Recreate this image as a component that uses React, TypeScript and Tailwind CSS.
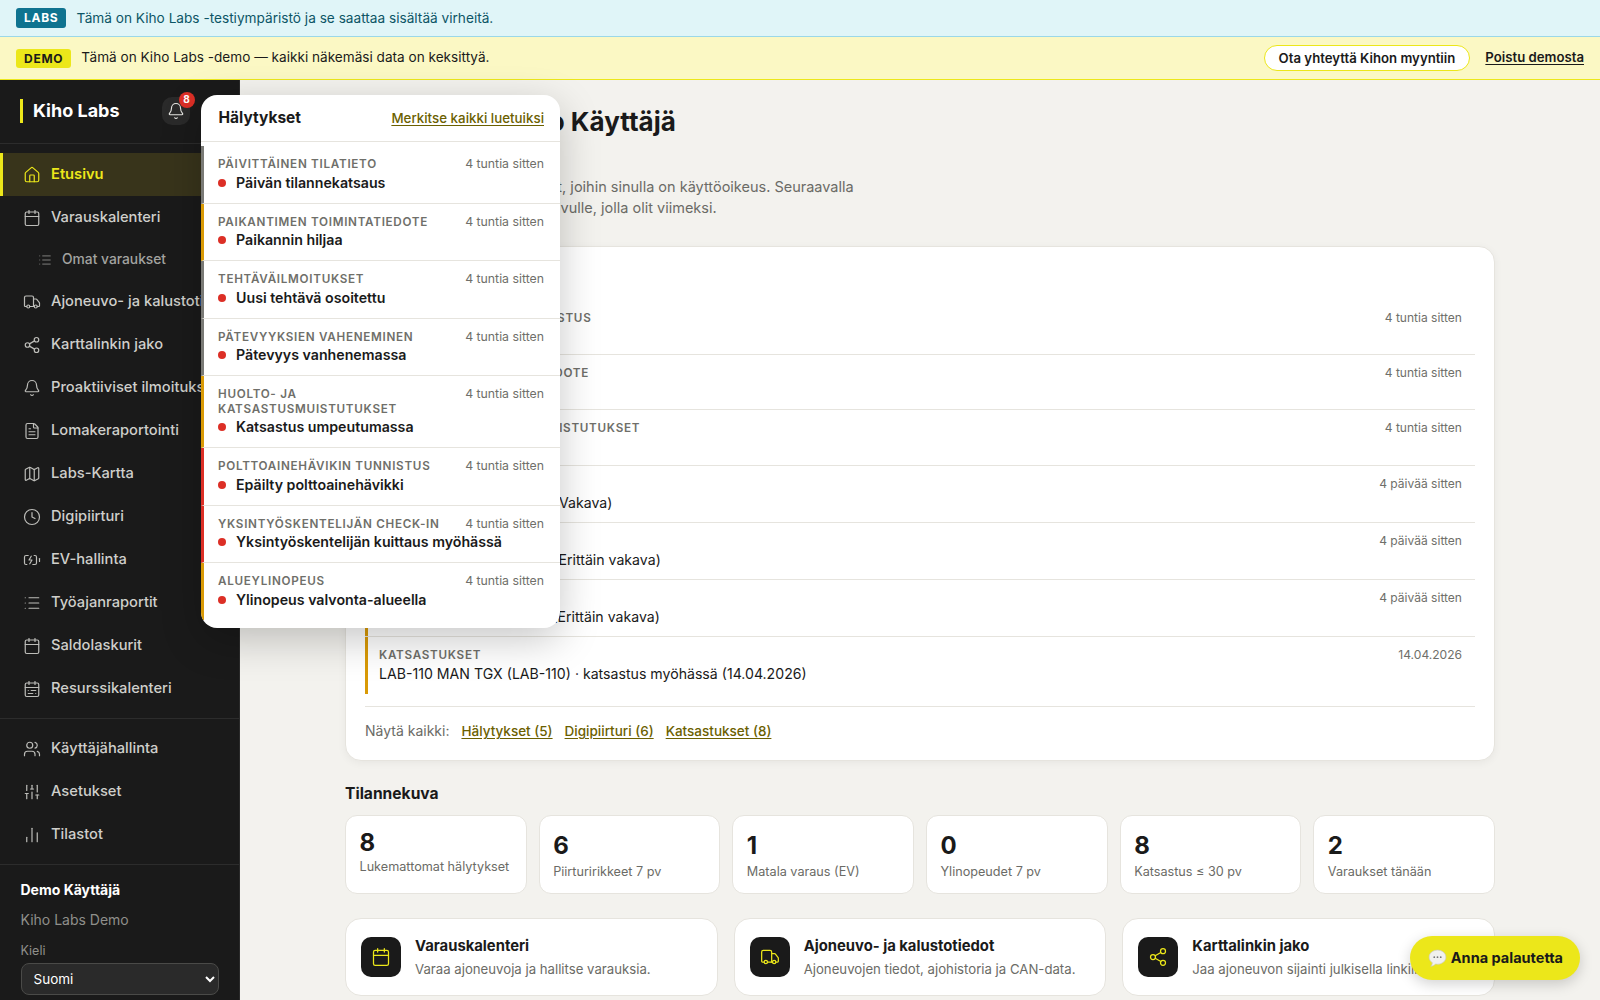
import {
  Bell,
  BatteryCharging,
  Calendar,
  CalendarRange,
  ChartNoAxesColumn,
  Clock,
  FileText,
  House,
  List,
  Map,
  Share2,
  SlidersVertical,
  Truck,
  Users,
} from 'lucide-react';

const font = { fontFamily: 'Inter, "Noto Sans", sans-serif' };

const mainNav = [
  { icon: House, label: 'Etusivu', active: true },
  { icon: Calendar, label: 'Varauskalenteri' },
  { icon: List, label: 'Omat varaukset', sub: true },
  { icon: Truck, label: 'Ajoneuvo- ja kalustotiedot' },
  { icon: Share2, label: 'Karttalinkin jako' },
  { icon: Bell, label: 'Proaktiiviset ilmoitukset' },
  { icon: FileText, label: 'Lomakeraportointi' },
  { icon: Map, label: 'Labs-Kartta' },
  { icon: Clock, label: 'Digipiirturi' },
  { icon: BatteryCharging, label: 'EV-hallinta' },
  { icon: List, label: 'Työajanraportit' },
  { icon: Calendar, label: 'Saldolaskurit' },
  { icon: CalendarRange, label: 'Resurssikalenteri' },
];

const adminNav = [
  { icon: Users, label: 'Käyttäjähallinta' },
  { icon: SlidersVertical, label: 'Asetukset' },
  { icon: ChartNoAxesColumn, label: 'Tilastot' },
];

const alerts = [
  { label: 'Päivittäinen tilatieto', title: 'Päivän tilannekatsaus', bar: 'border-l-[#7a7a76]' },
  { label: 'Paikantimen toimintatiedote', title: 'Paikannin hiljaa', bar: 'border-l-[#d99a06]' },
  { label: 'Tehtäväilmoitukset', title: 'Uusi tehtävä osoitettu', bar: 'border-l-[#7a7a76]' },
  { label: 'Pätevyyksien vaheneminen', title: 'Pätevyys vanhenemassa', bar: 'border-l-[#7a7a76]' },
  { label: 'Huolto- ja katsastusmuistutukset', title: 'Katsastus umpeutumassa', bar: 'border-l-[#d99a06]' },
  { label: 'Polttoainehävikin tunnistus', title: 'Epäilty polttoainehävikki', bar: 'border-l-[#dc2f26]' },
  { label: 'Yksintyöskentelijän check-in', title: 'Yksintyöskentelijän kuittaus myöhässä', bar: 'border-l-[#dc2f26]' },
  { label: 'Alueylinopeus', title: 'Ylinopeus valvonta-alueella', bar: 'border-l-[#d99a06]' },
];

const attention = [
  { label: 'Polttoainehävikin tunnistus', text: 'Epäilty polttoainehävikki', time: '4 tuntia sitten', bar: 'border-l-[#dc2f26]', height: 'h-[55px]' },
  { label: 'Paikantimen toimintatiedote', text: 'Paikannin hiljaa', time: '4 tuntia sitten', bar: 'border-l-[#d99a06]', height: 'h-[55px]' },
  { label: 'Huolto- ja katsastusmuistutukset', text: 'Katsastus umpeutumassa', time: '4 tuntia sitten', bar: 'border-l-[#d99a06]', height: 'h-[56px]' },
  { label: 'Digipiirturi', text: 'LAB-104 Volvo · Lepoaika (Vakava)', time: '4 päivää sitten', bar: 'border-l-[#d99a06]', height: 'h-[57px]' },
  { label: 'Digipiirturi', text: 'LAB-102 Volvo · Lepoaika (Erittäin vakava)', time: '4 päivää sitten', bar: 'border-l-[#d99a06]', height: 'h-[57px]' },
  { label: 'Digipiirturi', text: 'LAB-107 Volvo · Lepoaika (Erittäin vakava)', time: '4 päivää sitten', bar: 'border-l-[#d99a06]', height: 'h-[57px]' },
  { label: 'Katsastukset', text: 'LAB-110 MAN TGX (LAB-110) · katsastus myöhässä (14.04.2026)', time: '14.04.2026', bar: 'border-l-[#d99a06]', height: 'h-[57px]' },
];

const stats = [
  { value: '8', label: 'Lukemattomat hälytykset', tight: true },
  { value: '6', label: 'Piirturirikkeet 7 pv' },
  { value: '1', label: 'Matala varaus (EV)' },
  { value: '0', label: 'Ylinopeudet 7 pv' },
  { value: '8', label: 'Katsastus ≤ 30 pv' },
  { value: '2', label: 'Varaukset tänään' },
];

const shortcuts = [
  { icon: Calendar, title: 'Varauskalenteri', text: 'Varaa ajoneuvoja ja hallitse varauksia.' },
  { icon: Truck, title: 'Ajoneuvo- ja kalustotiedot', text: 'Ajoneuvojen tiedot, ajohistoria ja CAN-data.' },
  { icon: Share2, title: 'Karttalinkin jako', text: 'Jaa ajoneuvon sijainti julkisella linkillä.' },
];

function NavItem({ item }: { item: { icon: typeof Bell; label: string; active?: boolean; sub?: boolean } }) {
  const Icon = item.icon;
  if (item.sub) {
    return (
      <div className="flex h-[41px] items-center gap-[10px] whitespace-nowrap pl-[38px] text-[13.8px] font-medium text-[#a3a3a0]">
        <Icon size={14} strokeWidth={1.5} className="shrink-0 text-[#8d8d8a]" />
        {item.label}
      </div>
    );
  }
  return (
    <div
      className={
        item.active
          ? 'flex h-[43px] items-center gap-[10px] whitespace-nowrap border-l-[3px] border-[#ece71a] bg-[#38341b] pl-[20px] text-[14.7px] font-semibold text-[#ece71a]'
          : 'flex h-[43px] items-center gap-[10px] whitespace-nowrap pl-[23px] text-[14.7px] font-medium text-[#cfcfcb]'
      }
    >
      <Icon size={18} strokeWidth={1.6} className={item.active ? 'shrink-0' : 'shrink-0 text-[#bdbdb9]'} />
      {item.label}
    </div>
  );
}

function Sidebar() {
  return (
    <aside className="flex w-[240px] shrink-0 flex-col overflow-hidden border-r border-[#2a2a2a] bg-[#1a1a1a]">
      <div className="flex h-[64px] shrink-0 items-center border-b border-[#2c2c2c] pb-[2px] pl-[20px]">
        <span className="h-[24px] w-[3px] bg-[#ece71a]" />
        <span className="ml-[10px] text-[18px] font-bold text-white">Kiho Labs</span>
        <div className="relative ml-[42px] flex h-[28px] w-[28px] items-center justify-center rounded-[10px] bg-[#2a2a2a]">
          <Bell size={18} strokeWidth={1.5} className="text-[#e8e8e4]" />
          <span className="absolute -right-[5px] -top-[5px] flex h-[16px] w-[16px] items-center justify-center rounded-full bg-[#dc2f26] text-[10px] font-bold text-white">
            8
          </span>
        </div>
      </div>
      <nav className="shrink-0 border-b border-[#2c2c2c] pb-[8px] pt-[9px]">
        {mainNav.map((item) => (
          <NavItem key={item.label} item={item} />
        ))}
      </nav>
      <nav className="shrink-0 border-b border-[#2c2c2c] py-[8px]">
        {adminNav.map((item) => (
          <NavItem key={item.label} item={item} />
        ))}
      </nav>
      <div className="pl-[20.5px] pr-[20px] pt-[14.5px]">
        <div className="text-[14px] font-bold leading-[20px] text-white">Demo Käyttäjä</div>
        <div className="mt-[10px] text-[14px] leading-[20px] text-[#8f8f8b]">Kiho Labs Demo</div>
        <div className="mt-[12px] text-[12.5px] leading-[18px] text-[#8f8f8b]">Kieli</div>
        <select className="mt-[3px] h-[32px] w-full rounded-lg border border-[#4a4a48] bg-[#2a2a2a] pl-[8px] text-[13.5px] text-white">
          <option>Suomi</option>
        </select>
      </div>
    </aside>
  );
}

function AlertsPopover() {
  return (
    <div className="absolute left-[201px] top-[95px] w-[359px] overflow-hidden rounded-2xl bg-white shadow-[0_12px_40px_rgba(0,0,0,0.22)]">
      <div className="flex h-[47px] items-center justify-between border-b border-[#e6e4de] pl-[17.5px] pr-[16px]">
        <span className="text-[15.5px] font-bold text-[#1a1a1a]">Hälytykset</span>
        <span className="text-[13.35px] font-medium text-[#6b6000] underline underline-offset-2">Merkitse kaikki luetuiksi</span>
      </div>
      <div className="pb-[8px] pt-[4px]">
        {alerts.map((alert) => (
          <div key={alert.label} className={`border-b border-l-[3px] border-b-[#e6e4de] last:border-b-0 ${alert.bar} pb-[10px] pl-[14px] pr-[16px] pt-[11px]`}>
            <div className="flex items-start justify-between gap-3">
              <span className="text-[11.7px] font-semibold uppercase leading-[14.5px] tracking-[0.06em] text-[#6f6f6a]">{alert.label}</span>
              <span className="shrink-0 text-[12.3px] leading-[14.5px] text-[#6f6f6a]">4 tuntia sitten</span>
            </div>
            <div className="mt-[1px] flex items-center gap-[10px]">
              <span className="h-[8px] w-[8px] shrink-0 rounded-full bg-[#dc2f26]" />
              <span className="text-[14.2px] font-semibold leading-[20px] text-[#1a1a1a]">{alert.title}</span>
            </div>
          </div>
        ))}
      </div>
    </div>
  );
}

function Main() {
  return (
    <main className="flex-1 overflow-hidden bg-[#f3f2ee]">
      <div className="mx-auto w-[1150px] pt-[22px]">
        <h1 className="text-[26px] font-bold leading-[40px] text-[#1a1a1a]">Huomenta, Demo Käyttäjä</h1>
        <p className="mt-[34px] w-[560px] text-[14.5px] leading-[21px] text-[#6b6b66]">
          Täältä näet palvelut ja toiminnot, joihin sinulla on käyttöoikeus. Seuraavalla
          <br />
          kirjautumisella palaat takaisin sivulle, jolla olit viimeksi.
        </p>

        <section className="mt-[28px] h-[515px] rounded-2xl border border-[#e6e4de] bg-white px-[19px] pt-[16px] shadow-[0_2px_8px_rgba(0,0,0,0.05)]">
          <h2 className="h-[37px] text-[16px] font-bold leading-[24px] text-[#1a1a1a]">Vaatii huomiota</h2>
          {attention.map((row, i) => (
            <div key={row.text} className={i < attention.length - 1 ? `border-b border-[#e6e4de] ${row.height}` : row.height}>
              <div className={`flex h-full items-start justify-between border-l-[3px] ${row.bar} pl-[11px] pr-[13px] pt-[10px]`}>
                <div>
                  <div className="text-[11.7px] font-semibold uppercase leading-[16px] tracking-[0.06em] text-[#6f6f6a]">{row.label}</div>
                  <div className="mt-[1px] text-[14.14px] leading-[20px] text-[#1a1a1a]">{row.text}</div>
                </div>
                <span className="text-[12.05px] leading-[16px] text-[#6f6f6a]">{row.time}</span>
              </div>
            </div>
          ))}
          <div className="mt-[12px] flex items-center border-t border-[#e6e4de] pt-[14px] text-[14px] leading-[20px]">
            <span className="text-[#6b6b66]">Näytä kaikki:</span>
            <span className="ml-[12px] text-[13.5px] font-medium text-[#6b6000] underline underline-offset-2">Hälytykset (5)</span>
            <span className="ml-[12px] text-[13.5px] font-medium text-[#6b6000] underline underline-offset-2">Digipiirturi (6)</span>
            <span className="ml-[12px] text-[13.5px] font-medium text-[#6b6000] underline underline-offset-2">Katsastukset (8)</span>
          </div>
        </section>

        <h2 className="mt-[21px] text-[15.6px] font-bold leading-[24px] text-[#1a1a1a]">Tilannekuva</h2>
        <div className="mt-[9px] grid grid-cols-6 gap-[12px]">
          {stats.map((stat) => (
            <div key={stat.label} className="h-[79px] rounded-xl border border-[#e6e4de] bg-white px-[13.5px] pt-[12px]">
              <div className={stat.tight ? 'text-[24px] font-bold leading-[30px] text-[#1a1a1a]' : 'mt-[3px] text-[24px] font-bold leading-[30px] text-[#1a1a1a]'}>{stat.value}</div>
              <div className={stat.tight ? 'whitespace-nowrap text-[12.65px] leading-[18px] text-[#6b6b66]' : 'mt-[2px] whitespace-nowrap text-[12.65px] leading-[18px] text-[#6b6b66]'}>{stat.label}</div>
            </div>
          ))}
        </div>

        <div className="mt-[24px] grid grid-cols-3 gap-[16px]">
          {shortcuts.map((card) => {
            const Icon = card.icon;
            return (
              <div key={card.title} className="flex h-[78px] items-center gap-[14px] rounded-2xl border border-[#e6e4de] bg-white px-[15px]">
                <div className="flex h-[40px] w-[40px] shrink-0 items-center justify-center rounded-[10px] bg-[#1a1a1a]">
                  <Icon size={20} strokeWidth={1.5} className="text-[#ece71a]" />
                </div>
                <div>
                  <div className="text-[14.8px] font-bold leading-[22px] text-[#1a1a1a]">{card.title}</div>
                  <div className="mt-[2px] text-[13.2px] leading-[20px] text-[#6b6b66]">{card.text}</div>
                </div>
              </div>
            );
          })}
        </div>
      </div>
    </main>
  );
}

export default function App() {
  return (
    <div className="relative flex h-screen flex-col overflow-hidden" style={font}>
      <div className="flex h-[37px] shrink-0 items-center gap-[10px] border-b border-[#9bd8e8] bg-[#e0f5f8] px-[16px]">
        <span className="rounded-[3px] bg-[#0f7390] px-[8px] text-[12px] font-bold leading-[20px] tracking-[0.06em] text-white">LABS</span>
        <span className="text-[13.65px] text-[#0d5566]">Tämä on Kiho Labs -testiympäristö ja se saattaa sisältää virheitä.</span>
      </div>
      <div className="flex h-[43px] shrink-0 items-center border-b border-[#ece71a] bg-[#fbf8c4] px-[16px]">
        <span className="rounded-[3px] bg-[#ece71a] px-[8px] text-[12px] font-bold leading-[19px] tracking-[0.06em] text-[#1a1a1a]">DEMO</span>
        <span className="ml-[10px] pb-[2px] text-[13.6px] text-[#1a1a1a]">Tämä on Kiho Labs -demo — kaikki näkemäsi data on keksittyä.</span>
        <span className="ml-auto rounded-full border border-[#ece71a] bg-white px-[14px] text-[13.2px] font-semibold leading-[24px] text-[#1a1a1a]">Ota yhteyttä Kihon myyntiin</span>
        <span className="ml-[15px] text-[13.2px] font-semibold text-[#1a1a1a] underline underline-offset-2">Poistu demosta</span>
      </div>
      <div className="flex min-h-0 flex-1">
        <Sidebar />
        <Main />
      </div>
      <AlertsPopover />
      <button className="absolute bottom-[20px] right-[20px] flex h-[44px] items-center gap-[4px] rounded-full bg-[#ece71a] pl-[18px] pr-[17px] text-[14.5px] font-bold text-[#1a1a1a] shadow-[0_4px_14px_rgba(0,0,0,0.18)]">
        <svg width="19" height="19" viewBox="0 0 17 17">
          <path d="M8.5 1C4.4 1 1 3.8 1 7.3c0 2 1.1 3.8 2.9 4.9-.1 1.2-.6 2.5-1.4 3.3 1.7-.2 3.2-1 4.3-2 .5.1 1.1.1 1.7.1 4.1 0 7.5-2.8 7.5-6.3S12.6 1 8.5 1z" fill="#f1f1ee" stroke="#c9c9c5" strokeWidth="0.6" />
          <circle cx="5.6" cy="7.3" r="0.8" fill="#777" />
          <circle cx="8.5" cy="7.3" r="0.8" fill="#777" />
          <circle cx="11.4" cy="7.3" r="0.8" fill="#777" />
        </svg>
        Anna palautetta
      </button>
    </div>
  );
}
